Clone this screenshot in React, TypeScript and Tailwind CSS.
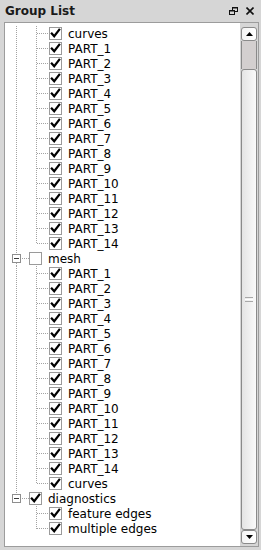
import React from "react";

type Row =
  | { kind: "child"; label: string; last: boolean; rootCont: boolean; idx: number }
  | { kind: "root"; label: string; checked: boolean; last: boolean; idx: number };

const parts = Array.from({ length: 14 }, (_, i) => `PART_${i + 1}`);

const buildRows = (): Row[] => {
  const rows: Row[] = [];
  let idx = 0;
  const g1 = ["curves", ...parts];
  g1.forEach((l, i) => rows.push({ kind: "child", label: l, last: i === g1.length - 1, rootCont: true, idx: idx++ }));
  rows.push({ kind: "root", label: "mesh", checked: false, last: false, idx: idx++ });
  const g2 = [...parts, "curves"];
  g2.forEach((l, i) => rows.push({ kind: "child", label: l, last: i === g2.length - 1, rootCont: true, idx: idx++ }));
  rows.push({ kind: "root", label: "diagnostics", checked: true, last: true, idx: idx++ });
  const g3 = ["feature edges", "multiple edges"];
  g3.forEach((l, i) => rows.push({ kind: "child", label: l, last: i === g3.length - 1, rootCont: false, idx: idx++ }));
  return rows;
};

const LINE = "#a3a3a3";

const CheckBox = ({ checked }: { checked: boolean }) => (
  <svg width="13" height="13" viewBox="0 0 13 13" className="shrink-0 block">
    <rect x="0.5" y="0.5" width="12" height="12" fill="#ffffff" stroke="#9a9a9a" />
    {checked && (
      <path d="M2.8 6.6 L5.2 9.2 L10.2 2.8" fill="none" stroke="#000000" strokeWidth="2.2" strokeLinecap="square" />
    )}
  </svg>
);

const ChildGuides = ({ last, rootCont, idx }: { last: boolean; rootCont: boolean; idx: number }) => {
  const off = (idx * 15) % 2;
  return (
    <svg width="44" height="15" viewBox="0 0 44 15" className="shrink-0 block">
      {rootCont && (
        <line x1="11.5" y1="0" x2="11.5" y2="15" stroke={LINE} strokeDasharray="1 1" strokeDashoffset={off} />
      )}
      <line x1="31.5" y1="0" x2="31.5" y2={last ? 8 : 15} stroke={LINE} strokeDasharray="1 1" strokeDashoffset={off} />
      <line x1="32" y1="7.5" x2="43" y2="7.5" stroke={LINE} strokeDasharray="1 1" />
    </svg>
  );
};

const RootGuides = ({ last, idx }: { last: boolean; idx: number }) => {
  const off = (idx * 15) % 2;
  return (
    <svg width="24" height="15" viewBox="0 0 24 15" className="shrink-0 block">
      <line x1="11.5" y1="0" x2="11.5" y2="3" stroke={LINE} strokeDasharray="1 1" strokeDashoffset={off} />
      {!last && <line x1="11.5" y1="12" x2="11.5" y2="15" stroke={LINE} strokeDasharray="1 1" />}
      <rect x="7.5" y="3.5" width="8" height="8" fill="#ffffff" stroke="#8e8e8e" />
      <line x1="9" y1="7.5" x2="14" y2="7.5" stroke="#3a3a3a" />
      <line x1="17" y1="7.5" x2="24" y2="7.5" stroke={LINE} strokeDasharray="1 1" />
    </svg>
  );
};

export default function App() {
  const rows = buildRows();
  return (
    <div
      className="w-[261px] h-[550px] bg-[#d6d6d6] flex flex-col overflow-hidden select-none"
      style={{ fontFamily: '"DejaVu Sans", "Liberation Sans", sans-serif' }}
    >
      <div className="h-[22px] shrink-0 flex items-center pl-[5px] pr-[7px]">
        <span className="text-[12px] font-bold text-[#1a1a1a] leading-none">Group List</span>
        <div className="ml-auto flex items-center gap-[8px]">
          <svg width="9" height="8" viewBox="0 0 9 8" className="block">
            <rect x="3.5" y="0.5" width="5" height="4" fill="none" stroke="#111" />
            <line x1="3" y1="1" x2="9" y2="1" stroke="#111" strokeWidth="1" />
            <rect x="0.5" y="3.5" width="5" height="4" fill="#d6d6d6" stroke="#111" />
            <line x1="0" y1="4" x2="6" y2="4" stroke="#111" strokeWidth="1" />
          </svg>
          <svg width="8" height="8" viewBox="0 0 8 8" className="block">
            <path d="M0.5 0.5 L7.5 7.5 M7.5 0.5 L0.5 7.5" stroke="#111" strokeWidth="1.6" />
          </svg>
        </div>
      </div>
      <div className="ml-[4px] mr-[2px] h-[525px] border border-[#9c9c9c] flex">
        <div className="flex-1 bg-white overflow-hidden pt-[3px]">
          {rows.map((r) =>
            r.kind === "child" ? (
              <div key={r.idx} className="h-[15px] flex items-center">
                <ChildGuides last={r.last} rootCont={r.rootCont} idx={r.idx} />
                <CheckBox checked />
                <span className="ml-[6px] text-[12px] leading-none text-black whitespace-nowrap">{r.label}</span>
              </div>
            ) : (
              <div key={r.idx} className="h-[15px] flex items-center">
                <RootGuides last={r.last} idx={r.idx} />
                <CheckBox checked={r.checked} />
                <span className="ml-[6px] text-[12px] leading-none text-black whitespace-nowrap">{r.label}</span>
              </div>
            )
          )}
        </div>
        <div className="w-[18px] shrink-0 pt-[4px] pb-[2px] pl-[1px] pr-[1px] flex flex-col">
          <div className="h-[14px] shrink-0 border border-[#8a8a8a] rounded-[3px] bg-gradient-to-r from-[#f4f4f4] to-[#ffffff] flex items-center justify-center">
            <svg width="7" height="4" viewBox="0 0 7 4" className="block">
              <path d="M0 4 L3.5 0 L7 4 Z" fill="#000" />
            </svg>
          </div>
          <div className="h-[28px] shrink-0 bg-[#d3cfcf] border-x border-[#8a8a8a]" />
          <div className="flex-1 border border-[#8a8a8a] rounded-[3px] bg-gradient-to-r from-[#e4e4e4] to-[#fafafa] flex items-center justify-center">
            <div className="flex flex-col gap-[1px]">
              <div className="w-[8px] h-[1px] bg-[#a8a8a8]" />
              <div className="w-[8px] h-[1px] bg-[#ffffff]" />
              <div className="w-[8px] h-[1px] bg-[#a8a8a8]" />
            </div>
          </div>
          <div className="h-[14px] shrink-0 border border-[#8a8a8a] rounded-[3px] bg-gradient-to-r from-[#f4f4f4] to-[#ffffff] flex items-center justify-center">
            <svg width="7" height="4" viewBox="0 0 7 4" className="block">
              <path d="M0 0 L7 0 L3.5 4 Z" fill="#000" />
            </svg>
          </div>
        </div>
      </div>
    </div>
  );
}
